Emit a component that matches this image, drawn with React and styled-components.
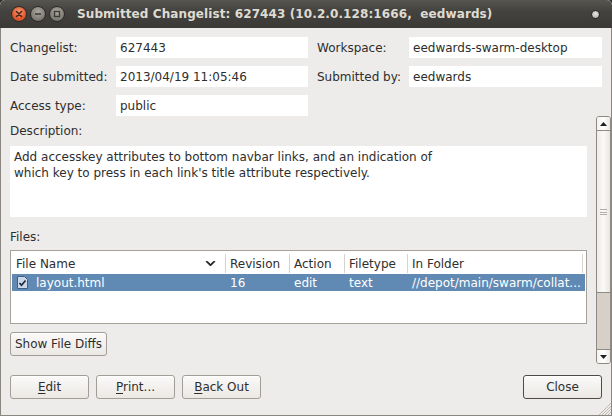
import React from 'react';
import styled, { createGlobalStyle } from 'styled-components';

const GlobalStyle = createGlobalStyle`
  html, body {
    margin: 0;
    padding: 0;
    background: #2b2a27;
  }
  * {
    box-sizing: border-box;
  }
`;

const fields = [
  ['Changelist:', '627443', 'Workspace:', 'eedwards-swarm-desktop'],
  ['Date submitted:', '2013/04/19 11:05:46', 'Submitted by:', 'eedwards'],
  ['Access type:', 'public'],
];

const columns = [
  { title: 'File Name', width: 214, sort: true },
  { title: 'Revision', width: 64 },
  { title: 'Action', width: 55 },
  { title: 'Filetype', width: 63 },
  { title: 'In Folder', width: 175 },
];

const files = [
  { name: 'layout.html', rev: '16', action: 'edit', type: 'text', folder: '//depot/main/swarm/collat...' },
];

const App = () => {
  return (
    <>
      <GlobalStyle />
      <Window>
        <TitleBar>
          <Controls>
            <WinButton $kind="close">
              <svg width="8" height="8" viewBox="0 0 8 8">
                <path d="M1.5 1.5 L6.5 6.5 M6.5 1.5 L1.5 6.5" stroke="#4a2418" strokeWidth="1.6" strokeLinecap="round" />
              </svg>
            </WinButton>
            <WinButton>
              <svg width="8" height="8" viewBox="0 0 8 8">
                <path d="M1 4 L7 4" stroke="#3a3935" strokeWidth="1.6" />
              </svg>
            </WinButton>
            <WinButton>
              <svg width="8" height="8" viewBox="0 0 8 8">
                <rect x="1.5" y="1.5" width="5" height="5" fill="none" stroke="#3a3935" strokeWidth="1.3" />
              </svg>
            </WinButton>
          </Controls>
          <Title>Submitted Changelist: 627443 (10.2.0.128:1666,&nbsp; eedwards)</Title>
          <MenuDot />
        </TitleBar>

        <Body>
          <InfoGrid>
            {fields.map((row) => (
              <React.Fragment key={row[0]}>
                <Label>{row[0]}</Label>
                <Field>{row[1]}</Field>
                {row[2] ? (
                  <>
                    <Label $right>{row[2]}</Label>
                    <Field>{row[3]}</Field>
                  </>
                ) : (
                  <span style={{ gridColumn: 'span 2' }} />
                )}
              </React.Fragment>
            ))}
          </InfoGrid>

          <ScrollPane>
            <PaneContent>
              <SectionLabel>Description:</SectionLabel>
              <Description>
                Add accesskey attributes to bottom navbar links, and an indication of
                <br />
                which key to press in each link's title attribute respectively.
              </Description>

              <SectionLabel $files>Files:</SectionLabel>
              <Table>
                <HeaderRow>
                  {columns.map((c) => (
                    <HeaderCell key={c.title} $w={c.width}>
                      <span>{c.title}</span>
                      {c.sort && (
                        <svg width="11" height="8" viewBox="0 0 11 8">
                          <path d="M1 1.5 L5.5 6 L10 1.5 L8.5 1.5 L5.5 4.2 L2.5 1.5 Z" fill="#1a1a1a" stroke="#1a1a1a" strokeWidth="0.8" strokeLinejoin="round" />
                        </svg>
                      )}
                    </HeaderCell>
                  ))}
                </HeaderRow>
                {files.map((f) => (
                  <FileRow key={f.name} $selected>
                    <Cell $w={214}>
                      <FileIcon>
                        <svg width="11" height="13" viewBox="0 0 11 13">
                          <path d="M0.5 0.5 H7.5 L10.5 3.5 V12.5 H0.5 Z" fill="#c9d7e6" stroke="#3f5f86" strokeWidth="1" />
                          <path d="M2.5 7 L4.5 9.3 L8.5 4.5" fill="none" stroke="#14243a" strokeWidth="1.6" />
                        </svg>
                      </FileIcon>
                      {f.name}
                    </Cell>
                    <Cell $w={64}>{f.rev}</Cell>
                    <Cell $w={55}>{f.action}</Cell>
                    <Cell $w={63}>{f.type}</Cell>
                    <Cell $w={175}>{f.folder}</Cell>
                  </FileRow>
                ))}
              </Table>

              <Button $wide>Show File Diffs</Button>
            </PaneContent>

            <ScrollBar>
              <ScrollArrow $up>
                <svg width="7" height="4" viewBox="0 0 7 4">
                  <path d="M0 4 L3.5 0 L7 4 Z" fill="#1f1f1f" />
                </svg>
              </ScrollArrow>
              <Thumb>
                <Grip />
              </Thumb>
              <Track />
              <ScrollArrow>
                <svg width="7" height="4" viewBox="0 0 7 4">
                  <path d="M0 0 L3.5 4 L7 0 Z" fill="#1f1f1f" />
                </svg>
              </ScrollArrow>
            </ScrollBar>
          </ScrollPane>

          <ButtonBar>
            <Button>
              <u>E</u>dit
            </Button>
            <Button>
              <u>P</u>rint...
            </Button>
            <Button>
              <u>B</u>ack Out
            </Button>
            <Spacer />
            <Button $default>Close</Button>
          </ButtonBar>
        </Body>
        <ResizeGrip>
          <svg width="13" height="13" viewBox="0 0 13 13">
            <path d="M13 1 L1 13 M13 4 L4 13 M13 7 L7 13 M13 10 L10 13" stroke="#bdb8b0" strokeWidth="1" />
          </svg>
        </ResizeGrip>
      </Window>
    </>
  );
};

export default App;

const Window = styled.div`
  position: relative;
  width: 612px;
  height: 416px;
  display: flex;
  flex-direction: column;
  background: #edeceb;
  font-family: 'DejaVu Sans', 'Liberation Sans', sans-serif;
  font-size: 12px;
  color: #2e2e2e;
  overflow: hidden;
  border-radius: 5px 5px 0 0;
`;

const TitleBar = styled.div`
  height: 28px;
  flex: none;
  display: flex;
  align-items: center;
  padding: 0 12px 0 11px;
  background: linear-gradient(#56554f, #43423e 40%, #3b3a36);
  border-radius: 5px 5px 0 0;
`;

const Controls = styled.div`
  display: flex;
  gap: 3px;
  margin-right: 12px;
`;

const WinButton = styled.div`
  width: 16px;
  height: 16px;
  border-radius: 50%;
  display: flex;
  align-items: center;
  justify-content: center;
  border: 1px solid #2c2b28;
  background: ${(p) =>
    p.$kind === 'close'
      ? 'radial-gradient(circle at 50% 35%, #f69a75, #e35d31 55%, #b8421c)'
      : 'radial-gradient(circle at 50% 35%, #a9a69e, #838079 60%, #66635d)'};
`;

const Title = styled.div`
  flex: 1;
  font-weight: bold;
  font-size: 12px;
  color: #dfdbd2;
  white-space: nowrap;
  letter-spacing: 0.1px;
`;

const MenuDot = styled.div`
  width: 9px;
  height: 9px;
  border-radius: 50%;
  background: radial-gradient(circle at 50% 40%, #e8e6e2, #a9a6a0);
  border: 1px solid #2a2926;
`;

const Body = styled.div`
  flex: 1;
  display: flex;
  flex-direction: column;
  border: 1px solid #8a8680;
  border-top: none;
`;

const InfoGrid = styled.div`
  display: grid;
  grid-template-columns: 106px 192px 101px 193px;
  grid-auto-rows: 21px;
  row-gap: 8px;
  padding: 9px 0 0 9px;
`;

const Label = styled.div`
  display: flex;
  align-items: center;
  white-space: nowrap;
  padding-left: ${(p) => (p.$right ? '9px' : '0')};
`;

const Field = styled.div`
  background: #ffffff;
  display: flex;
  align-items: center;
  padding-left: 4px;
  white-space: nowrap;
`;

const ScrollPane = styled.div`
  display: flex;
  height: 248px;
  flex: none;
`;

const PaneContent = styled.div`
  flex: 1;
  display: flex;
  flex-direction: column;
  align-items: flex-start;
  padding: 0 9px 0 9px;
`;

const SectionLabel = styled.div`
  height: ${(p) => (p.$files ? '33px' : '30px')};
  display: flex;
  align-items: center;
  padding-top: ${(p) => (p.$files ? '6px' : '0')};
`;

const Description = styled.div`
  width: 577px;
  height: 71px;
  background: #ffffff;
  padding: 3px 4px;
  line-height: 16px;
`;

const Table = styled.div`
  width: 577px;
  height: 74px;
  background: #ffffff;
  border: 1px solid #a6a29b;
  padding: 0 1px;
  margin-bottom: 8px;
`;

const HeaderRow = styled.div`
  display: flex;
  height: 23px;
`;

const HeaderCell = styled.div`
  width: ${(p) => p.$w}px;
  display: flex;
  align-items: center;
  justify-content: space-between;
  padding: 1px 9px 0 4px;
  border-right: 1px solid #d6d2cc;
  height: 19px;
  margin-top: 3px;
  white-space: nowrap;
`;

const FileRow = styled.div`
  display: flex;
  height: 17px;
  background: ${(p) => (p.$selected ? '#6089b3' : 'transparent')};
  color: ${(p) => (p.$selected ? '#ffffff' : 'inherit')};
`;

const Cell = styled.div`
  width: ${(p) => p.$w}px;
  display: flex;
  align-items: center;
  padding-left: 4px;
  white-space: nowrap;
  overflow: hidden;
`;

const FileIcon = styled.span`
  display: inline-flex;
  width: 20px;
  padding-left: 1px;
`;

const Button = styled.button`
  font-family: 'DejaVu Sans', 'Liberation Sans', sans-serif;
  font-size: 12px;
  color: #2e2e2e;
  height: 24px;
  width: ${(p) => (p.$wide ? '97px' : '79px')};
  padding: 0;
  border-radius: 3px;
  border: 1px solid ${(p) => (p.$default ? '#4d4b47' : '#a29e97')};
  background: linear-gradient(#fbfaf9, #ebe8e4);
  box-shadow: inset 0 1px 0 #ffffff;
  white-space: nowrap;
  u {
    text-decoration-thickness: 1px;
    text-underline-offset: 2px;
  }
`;

const ButtonBar = styled.div`
  display: flex;
  gap: 7px;
  padding: 11px 9px 0 9px;
`;

const Spacer = styled.div`
  flex: 1;
`;

const ScrollBar = styled.div`
  width: 15px;
  flex: none;
  display: flex;
  flex-direction: column;
  border: 1px solid #8f8a83;
  border-radius: 3px;
  overflow: hidden;
`;

const ScrollArrow = styled.div`
  height: 14px;
  flex: none;
  display: flex;
  align-items: center;
  justify-content: center;
  background: linear-gradient(90deg, #f4f2ef, #ffffff 50%, #ebe8e4);
  border-bottom: ${(p) => (p.$up ? '1px solid #8f8a83' : 'none')};
  border-top: ${(p) => (p.$up ? 'none' : '1px solid #8f8a83')};
`;

const Thumb = styled.div`
  height: 162px;
  flex: none;
  display: flex;
  align-items: center;
  justify-content: center;
  background: linear-gradient(90deg, #eeebe7, #fbfaf9 50%, #e9e5e0);
  border-bottom: 1px solid #8f8a83;
`;

const Grip = styled.div`
  width: 7px;
  height: 6px;
  border-top: 1px solid #b3aea7;
  border-bottom: 1px solid #b3aea7;
  background: linear-gradient(transparent 2px, #b3aea7 2px, #b3aea7 3px, transparent 3px);
`;

const Track = styled.div`
  flex: 1;
  background: #d6d0c8;
`;

const ResizeGrip = styled.div`
  position: absolute;
  right: 1px;
  bottom: 1px;
  width: 13px;
  height: 13px;
`;
